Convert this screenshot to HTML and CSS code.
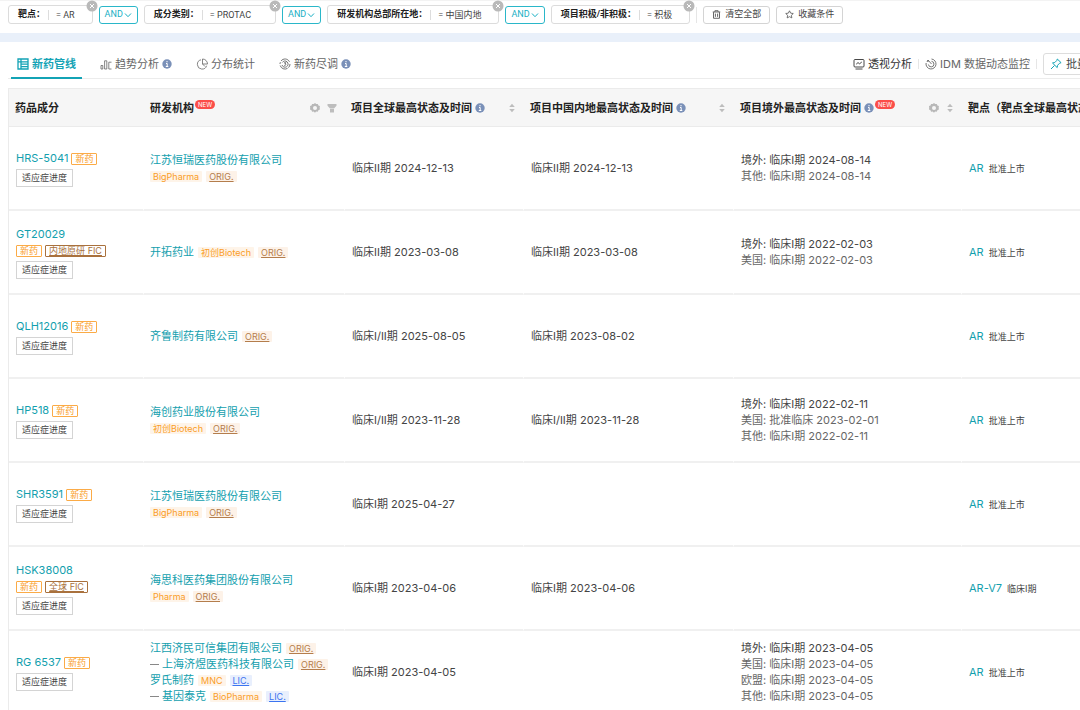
FILE: index.html
```html
<!DOCTYPE html>
<html lang="zh-CN">
<head>
    <meta charset="UTF-8">
    <title>新药管线</title>
    <link rel="stylesheet" href="styles.css">
</head>
<body>
<!--公用图标-->
<svg class="sprite" aria-hidden="true">
    <symbol id="i-close" viewBox="0 0 12 12"><circle cx="6" cy="6" r="5.5" fill="#b9b9b9"/><path d="M4 4l4 4M8 4l-4 4" stroke="#fff" fill="none"/></symbol>
    <symbol id="i-down" viewBox="0 0 8 8"><path d="M1 2.5l3 3.2 3-3.2" fill="none" stroke="currentColor"/></symbol>
    <symbol id="i-info" viewBox="0 0 10 10"><circle cx="5" cy="5" r="4.7" fill="#7a90b8"/><path d="M5 2v1.3M4 4.5h1.2v3M3.8 7.5h2.5" fill="none" stroke="#fff"/></symbol>
    <symbol id="i-gear" viewBox="0 0 12 12"><path d="M6 1.1l1.2 1 1.6-.2.6 1.5 1.5.7-.2 1.6.2 1.8-1.5.8-.7 1.5-1.6-.2L6 10.8l-1.300-1.200-1.600.2-.6-1.500L1 7.500l.2-1.800L1 4.100l1.500-.7.6-1.500 1.600.2z" fill="#b8b8b8"/><circle cx="6" cy="6" r="2" fill="#f6f6f6"/></symbol>
    <symbol id="i-filter" viewBox="0 0 10 10"><path d="M.5 1h9v1.800L7 5.400H3L.5 2.800zM3 6h4v3.500H3z" fill="#bdbdbd"/></symbol>
    <symbol id="i-sort" viewBox="0 0 8 10"><path d="M4 .8l2.800 3.100H1.200zM4 9.200L1.200 6.100h5.600z" fill="#bdbdbd"/></symbol>
</svg>

<div id="filter">
    <div class="cond"><b>靶点：</b><span>= AR</span><button class="close" aria-label="删除"><svg><use href="#i-close"/></svg></button></div>
    <button class="and">AND<svg><use href="#i-down"/></svg></button>
    <div class="cond wide"><b>成分类别：</b><span>= PROTAC</span><button class="close" aria-label="删除"><svg><use href="#i-close"/></svg></button></div>
    <button class="and">AND<svg><use href="#i-down"/></svg></button>
    <div class="cond"><b>研发机构总部所在地：</b><span>= 中国内地</span><button class="close" aria-label="删除"><svg><use href="#i-close"/></svg></button></div>
    <button class="and">AND<svg><use href="#i-down"/></svg></button>
    <div class="cond"><b>项目积极/非积极：</b><span>= 积极</span><button class="close" aria-label="删除"><svg><use href="#i-close"/></svg></button></div>
    <i class="line"></i>
    <button class="btn"><svg viewBox="0 0 10 10"><path d="M.8 2.200h8.400M3.200 2V.8h3.600V2M1.700 2.400v6.800h6.600V2.400M3.800 4v3.600M6.200 4v3.600" fill="none" stroke="#555"/></svg>清空全部</button>
    <button class="btn"><svg viewBox="0 0 10 10"><path d="M5 .9l1.300 2.600 2.900.4-2.100 2 .5 2.900L5 7.400 2.400 8.800l.5-2.900-2.100-2 2.900-.4z" fill="none" stroke="#555" stroke-width=".9"/></svg>收藏条件</button>
</div><!--filter end-->

<div id="main">
    <div id="bar">
        <ul id="tab">
            <li class="selected"><a href="#"><svg viewBox="0 0 12 12"><path d="M1 1h10v10H1zM1 3.800h10M4 1v10M4 6.200h7M4 8.600h7" fill="none" stroke="currentColor" stroke-width="1.3"/></svg>新药管线</a></li>
            <li><a href="#"><svg viewBox="0 0 12 12"><path d="M1 11V7.500h1.800V11zM4.600 11V2.800h2.200V11zM11.500 4.200H8.800V11h2.700" fill="none" stroke="currentColor" stroke-width=".8"/></svg>趋势分析</a><svg class="info"><use href="#i-info"/></svg></li>
            <li><a href="#"><svg viewBox="0 0 12 12"><path d="M5 1.800a4.700 4.700 0 1 0 5.600 5.900M6.500 1v5h5A5 5 0 0 0 6.500 1zM6.500 6L9 8.500" fill="none" stroke="currentColor" stroke-width=".8"/></svg>分布统计</a></li>
            <li><a href="#"><svg viewBox="0 0 12 12"><path d="M2 3a5 5 0 0 1 8.500.8M11 6a5 5 0 0 1-1.500 3.600M8.500 10.400A5 5 0 0 1 1.200 7.500M1 6q0-1 .4-1.800M3.300 4.500a3.100 3.100 0 1 1-.3 2.500M5 4.800h2L5.900 6c1.400 0 1.200 1.700-.7 1.400" fill="none" stroke="currentColor" stroke-width=".9"/></svg>新药尽调</a><svg class="info"><use href="#i-info"/></svg></li>
        </ul>
        <div id="tool">
            <a href="#" class="dark"><svg viewBox="0 0 12 12"><path d="M2 1.500h8q1 0 1 1v5.500q0 1-1 1H2q-1 0-1-1V2.500q0-1 1-1zM3.200 6.200L5 4.600l1.600 1.200L8.800 4M2.500 11h7" fill="none" stroke="currentColor" stroke-width=".9"/></svg>透视分析</a>
            <i class="line"></i>
            <a href="#"><svg viewBox="0 0 12 12"><path d="M6.500 1a5 5 0 1 1-5.400 4M6.500 3.300A2.800 2.800 0 1 1 3.400 6.500M6.500 6L3 2M3 2l.2 1.800M3 2l-1 2" fill="none" stroke="currentColor" stroke-width=".9"/></svg>IDM 数据动态监控</a>
            <i class="line"></i>
            <button class="batch"><svg viewBox="0 0 12 12"><path d="M7.300 1l3.800 3.700-1.500.5-2 2.100-.4 2.300L2.500 5l2.300-.5 2-2zM4.500 7.500L1 11" fill="none" stroke="#13a3b5"/></svg>批量</button>
        </div>
    </div><!--bar end-->

    <div id="list">
        <table>
            <colgroup>
                <col class="c1"><col class="c2"><col class="c3"><col class="c4"><col class="c5"><col class="c6">
            </colgroup>
            <thead>
            <tr>
                <th><div>药品成分</div></th>
                <th><div>研发机构<sup>NEW</sup><svg class="first"><use href="#i-gear"/></svg><svg class="small"><use href="#i-filter"/></svg></div></th>
                <th><div>项目全球最高状态及时间<svg class="info"><use href="#i-info"/></svg><svg class="sort first"><use href="#i-sort"/></svg></div></th>
                <th><div>项目中国内地最高状态及时间<svg class="info"><use href="#i-info"/></svg><svg class="sort first"><use href="#i-sort"/></svg></div></th>
                <th><div>项目境外最高状态及时间<svg class="info"><use href="#i-info"/></svg><sup>NEW</sup><svg class="first"><use href="#i-gear"/></svg><svg class="sort"><use href="#i-sort"/></svg></div></th>
                <th><div>靶点（靶点全球最高状态）</div></th>
            </tr>
            </thead>
            <tbody>
            <tr>
                <td><a href="#">HRS-5041</a> <em>新药</em><button>适应症进度</button></td>
                <td><p><a href="#">江苏恒瑞医药股份有限公司</a></p><p><span class="tag">BigPharma</span><span class="tag orig">ORIG.</span></p></td>
                <td>临床II期 2024-12-13</td>
                <td>临床II期 2024-12-13</td>
                <td><p>境外: 临床I期 2024-08-14</p><p class="sub">其他: 临床I期 2024-08-14</p></td>
                <td><a href="#">AR</a><small>批准上市</small></td>
            </tr>
            <tr>
                <td><p><a href="#">GT20029</a></p><em>新药</em> <em class="fic">内地原研 FIC</em><button>适应症进度</button></td>
                <td><p><a href="#">开拓药业</a><span class="tag">初创Biotech</span><span class="tag orig">ORIG.</span></p></td>
                <td>临床II期 2023-03-08</td>
                <td>临床II期 2023-03-08</td>
                <td><p>境外: 临床I期 2022-02-03</p><p class="sub">美国: 临床I期 2022-02-03</p></td>
                <td><a href="#">AR</a><small>批准上市</small></td>
            </tr>
            <tr>
                <td><a href="#">QLH12016</a> <em>新药</em><button>适应症进度</button></td>
                <td><p><a href="#">齐鲁制药有限公司</a><span class="tag orig">ORIG.</span></p></td>
                <td>临床I/II期 2025-08-05</td>
                <td>临床I期 2023-08-02</td>
                <td></td>
                <td><a href="#">AR</a><small>批准上市</small></td>
            </tr>
            <tr>
                <td><a href="#">HP518</a> <em>新药</em><button>适应症进度</button></td>
                <td><p><a href="#">海创药业股份有限公司</a></p><p><span class="tag">初创Biotech</span><span class="tag orig">ORIG.</span></p></td>
                <td>临床I/II期 2023-11-28</td>
                <td>临床I/II期 2023-11-28</td>
                <td><p>境外: 临床I期 2022-02-11</p><p class="sub">美国: 批准临床 2023-02-01</p><p class="sub">其他: 临床I期 2022-02-11</p></td>
                <td><a href="#">AR</a><small>批准上市</small></td>
            </tr>
            <tr>
                <td><a href="#">SHR3591</a> <em>新药</em><button>适应症进度</button></td>
                <td><p><a href="#">江苏恒瑞医药股份有限公司</a></p><p><span class="tag">BigPharma</span><span class="tag orig">ORIG.</span></p></td>
                <td>临床I期 2025-04-27</td>
                <td></td>
                <td></td>
                <td><a href="#">AR</a><small>批准上市</small></td>
            </tr>
            <tr>
                <td><p><a href="#">HSK38008</a></p><em>新药</em> <em class="fic">全球 FIC</em><button>适应症进度</button></td>
                <td><p><a href="#">海思科医药集团股份有限公司</a></p><p><span class="tag">Pharma</span><span class="tag orig">ORIG.</span></p></td>
                <td>临床I期 2023-04-06</td>
                <td>临床I期 2023-04-06</td>
                <td></td>
                <td><a href="#">AR-V7</a><small>临床I期</small></td>
            </tr>
            <tr>
                <td><a href="#">RG 6537</a> <em>新药</em><button>适应症进度</button></td>
                <td>
                    <p><a href="#">江西济民可信集团有限公司</a><span class="tag orig">ORIG.</span></p>
                    <p><i class="dash"></i><a href="#">上海济煜医药科技有限公司</a><span class="tag orig">ORIG.</span></p>
                    <p><a href="#">罗氏制药</a><span class="tag">MNC</span><span class="tag lic">LIC.</span></p>
                    <p><i class="dash"></i><a href="#">基因泰克</a><span class="tag">BioPharma</span><span class="tag lic">LIC.</span></p>
                </td>
                <td>临床I期 2023-04-05</td>
                <td></td>
                <td><p>境外: 临床I期 2023-04-05</p><p class="sub">美国: 临床I期 2023-04-05</p><p class="sub">欧盟: 临床I期 2023-04-05</p><p class="sub">其他: 临床I期 2023-04-05</p></td>
                <td><a href="#">AR</a><small>批准上市</small></td>
            </tr>
            </tbody>
        </table>
    </div><!--list end-->
</div><!--main end-->
</body>
</html>
```

FILE: styles.css
```css
*{
    margin: 0;
    padding: 0;
    box-sizing: border-box;
}
ul{
    list-style: none;
}
a{
    text-decoration: none;
    color: #13a0ae;
}
i,em{
    font-style: normal;
}
body{
    font: 11px/16px Inter, "Noto Sans CJK SC", sans-serif;
    color: #444;
    background-color: #fff;
    overflow-x: hidden;
}
button{
    font: inherit;
    color: inherit;
    background-color: #fff;
    cursor: pointer;
}
svg{
    width: 12px;
    height: 12px;
    flex: none;
}
.sprite{
    display: none;
}
.line{
    width: 1px;
    height: 16px;
    background-color: #e6e6e6;
}
svg.info{
    width: 10px;
    height: 10px;
    margin-left: 3px;
}

/*筛选条件*/
#filter{
    display: flex;
    align-items: center;
    gap: 6px;
    height: 42px;
    padding: 0 8px 5px;
    border-top: 1px solid #f3f3f3;
    border-bottom: 9px solid #e9f0fa;
    font: 9px/17px Roboto, "Noto Sans CJK SC", sans-serif;
    white-space: nowrap;
}
.cond{
    position: relative;
    display: flex;
    align-items: center;
    height: 19px;
    padding: 0 17px 0 9px;
    border: 1px solid #dcdcdc;
    border-radius: 3px;
}
.cond b{
    color: #222;
    padding-right: 3px;
}
.cond span{
    padding-left: 7px;
    line-height: 10px;
    border-left: 1px solid #ddd;
}
.cond.wide{
    padding-right: 24px;
}
.close{
    position: absolute;/*压在右上角*/
    top: -6px;
    right: -6px;
    width: 12px;
    height: 12px;
    border: 0;
    background: none;
}
.close svg{
    display: block;
}
.and{
    display: flex;
    align-items: center;
    height: 18px;
    padding: 0 5px;
    color: #17afc4;
    border: 1px solid #2ab7c9;
    border-radius: 3px;
}
.and svg{
    width: 8px;
    height: 8px;
    margin-left: 1px;
}
.btn{
    display: flex;
    align-items: center;
    height: 18px;
    padding: 0 8px;
    border: 1px solid #d4d4d4;
    border-radius: 3px;
}
.btn svg{
    width: 9px;
    height: 9px;
    margin-right: 4px;
}

/*标签页*/
#main{
    min-width: 1103px;
    padding: 8px 8px 0;
}
#bar{
    display: flex;
    justify-content: space-between;
    height: 29px;
    margin-bottom: 9px;
    border-bottom: 1px solid #ececec;
}
#tab{
    display: flex;
    gap: 12px;
    padding-left: 3px;
}
#tab li{
    display: flex;
    align-items: center;
    height: 29px;
    padding: 0 6px;
    border-bottom: 2px solid transparent;
}
#tab a,#tool a{
    display: flex;
    align-items: center;
    gap: 3px;
    color: #666;
}
#tab li.selected{
    border-color: #13a3b5;
}
#tab .selected a{
    color: #13a3b5;
    font-weight: bold;
}
#tool{
    display: flex;
    align-items: center;
    gap: 6px;
}
#tool a.dark{
    color: #333;
}
#tool .line{
    height: 10px;
}
.batch{
    display: flex;
    align-items: center;
    gap: 4px;
    height: 22px;
    padding: 0 6px;
    border: 1px solid #ddd;
    border-radius: 3px;
}

/*表格*/
#list{
    border: 1px solid #ebebeb;
    border-width: 1px 0 0 1px;
}
table{
    width: 100%;
    table-layout: fixed;
    border-collapse: separate;
    border-spacing: 0;
}
.c1{
    width: 135px;
}
.c2{
    width: 201px;
}
.c3{
    width: 179px;
}
.c4{
    width: 210px;
}
.c5{
    width: 228px;
}
th{
    height: 38px;
    padding: 0 8px 0 6px;
    color: #222;
    text-align: left;
    white-space: nowrap;
    background-color: #f6f6f6;
    border-bottom: 1px solid #ebebeb;
}
th div{
    display: flex;
    align-items: center;
}
th .first{
    margin-left: auto;
}
th .small{
    width: 10px;
    height: 10px;
    margin-left: 6px;
}
th .sort{
    width: 8px;
    height: 10px;
}
th .first + .sort{
    margin-left: 6px;
}
sup{
    align-self: flex-start;
    height: 9px;
    padding: 0 3px;
    margin-left: 1px;
    font: 6px/9px Inter, sans-serif;
    color: #fff;
    background-color: #fb4e49;
    border-radius: 5px;
}
td{
    height: 84px;
    padding: 0 0 0 7px;
    border-bottom: 2px solid #f0f0f0;
    border-right: 1px solid #fff;
    white-space: nowrap;
}
td:nth-child(2){
    padding-left: 6px;
}
td .sub{
    color: #666;
}
td p{
    display: flex;
    align-items: center;
    height: 16px;
}
td button{
    display: block;
    height: 18px;
    margin-top: 3px;
    padding: 0 5px;
    font-size: 9px;
    line-height: 16px;
    border: 1px solid #d4d4d4;
}
td small{
    font-size: 9px;
    margin-left: 5px;
}
em{
    display: inline-block;
    height: 12px;
    padding: 0 3px;
    font-size: 9px;
    line-height: 10px;
    vertical-align: middle;
    color: #fa9d27;
    border: 1px solid #fbab47;
    border-radius: 1px;
}
em.fic{
    color: #a9713d;
    border-color: #a9713d;
    text-decoration: underline;
}
.tag{
    padding: 0 3px;
    margin-right: 4px;
    font-size: 9px;
    line-height: 11px;
    color: #fa9d27;
    background-color: #fef4e9;
    border-radius: 1px;
}
a + .tag{
    margin-left: 4px;
}
.orig{
    color: #b47d4c;
    background-color: #fdf2e8;
    text-decoration: underline;
}
.lic{
    color: #3b74f0;
    background-color: #e8effd;
    text-decoration: underline;
}
.dash{
    width: 9px;
    height: 1px;
    margin-right: 3px;
    background-color: #888;
}
```
